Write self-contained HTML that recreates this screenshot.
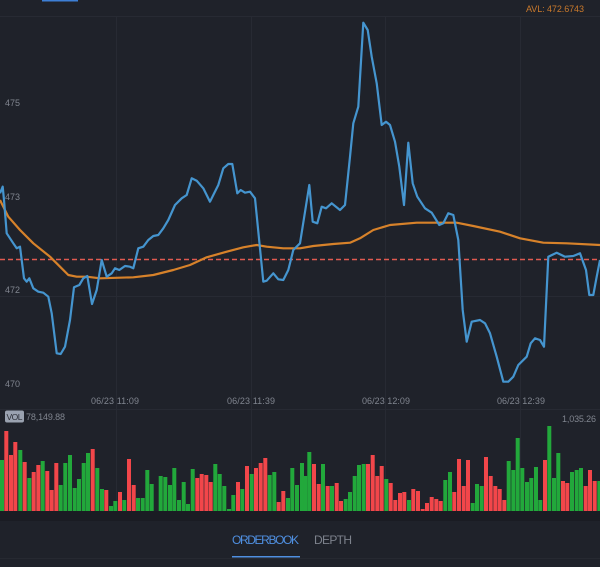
<!DOCTYPE html>
<html><head><meta charset="utf-8"><style>
html,body{margin:0;padding:0;background:#1f222a;width:600px;height:567px;overflow:hidden;font-family:"Liberation Sans",sans-serif}
svg{position:absolute;left:0;top:0}
</style></head><body>
<svg width="600" height="567" viewBox="0 0 600 567" xmlns="http://www.w3.org/2000/svg">
<rect x="0" y="0" width="600" height="567" fill="#1f222a"/>
<rect x="42" y="0" width="36" height="1.5" fill="#3d7fd6"/>
<g stroke="#272a33" stroke-width="1">
<line x1="0" y1="16.5" x2="600" y2="16.5"/>
<line x1="0" y1="296.5" x2="600" y2="296.5"/>
<line x1="0" y1="409.5" x2="600" y2="409.5"/>
<line x1="116.5" y1="16" x2="116.5" y2="511"/>
<line x1="251.5" y1="16" x2="251.5" y2="511"/>
<line x1="385.5" y1="16" x2="385.5" y2="511"/>
<line x1="520.5" y1="16" x2="520.5" y2="511"/>
</g>
<rect x="0" y="511" width="600" height="10" fill="#1a1c23"/>
<line x1="0" y1="558.5" x2="600" y2="558.5" stroke="#262931"/>
<g font-size="9" fill="#80858f">
<text x="5" y="106">475</text>
<text x="5" y="200">473</text>
<text x="5" y="293">472</text>
<text x="5" y="387">470</text>
<text x="91" y="404" textLength="48">06/23 11:09</text>
<text x="227" y="404" textLength="48">06/23 11:39</text>
<text x="362" y="404" textLength="48">06/23 12:09</text>
<text x="497" y="404" textLength="48">06/23 12:39</text>
<text x="26" y="420" textLength="39">78,149.88</text>
<text x="562" y="422" textLength="34">1,035.26</text>
</g>
<text x="526" y="12" font-size="9" fill="#c9792c" textLength="58">AVL: 472.6743</text>
<rect x="5" y="410.5" width="19" height="12" rx="2" fill="#9aa2b0"/>
<text x="6.5" y="420" font-size="8.5" fill="#2a2d35" textLength="16">VOL</text>

<line x1="0" y1="259.5" x2="600" y2="259.5" stroke="#e05a50" stroke-width="1.6" stroke-dasharray="5,3"/>

<polyline fill="none" stroke="#d7822a" stroke-width="2.2" stroke-linejoin="round" points="0,200 3.3,206.7 8.3,216.7 20,230 33.3,243.3 50,256.7 60,266.7 68.3,275 76.7,276.7 86.7,276.7 100,278.3 133.3,277.3 153.3,275 173.3,270 190,265 206.7,257.3 226.7,251.7 243.3,247.3 256.7,245 266.7,246.7 283.3,248.3 300,248.3 313.3,246 333.3,244 350,242.7 360,238.3 373.3,230 390,225 416.7,222.7 456.7,222.7 473.3,226 500,231.7 520,238.3 543.3,242.7 566.7,243.3 600,245"/>

<polyline fill="none" stroke="#4595cf" stroke-width="2.2" stroke-linejoin="round" points="0,193.3 2.7,186.7 4,200 6.7,233.3 13.3,243.3 16.7,248.3 20,246.7 24,278.3 26.7,281.7 29.3,278.3 33.3,288.3 38.3,291.7 43.3,292.7 48.3,296.7 51.7,313.3 56.7,353.3 60.7,354 65,346.7 70,320 74,287.3 79.3,285 83.3,278.3 87.3,276 92,304 96.7,290 101.7,260 106.7,276.7 111.7,273.3 115,268.3 119.3,270 125,266 130,266.7 133.3,268.3 138.3,248.3 143.3,246.7 148.3,240 153.3,236 158.3,235 163.3,228.3 168.3,220 175,205 181.7,198.3 186.7,195 191.7,178.3 196.7,180.7 203.3,188.3 210,201.7 213.3,195 218.3,185 223.3,168.3 228.3,164 232.3,164 237.3,193.3 240.7,190 245,192.7 250,191.7 255,198.3 263.3,281.7 266.7,280.7 273.3,273.3 278.3,279.3 283.3,280 288.3,270 293.3,250 300,243.3 309.3,185 312.7,221.7 317.3,223.3 321.7,206.7 326,208.3 331.7,203.3 340,210 345,205 350,156.7 353.3,123.3 358.3,106.7 363.3,22.7 367.7,30 371.7,56.7 376.7,83.3 381.7,125 386,121.7 390,125 395,141.7 399.3,166.7 404,205 408.3,142.7 412.7,183.3 417.3,196.7 425,208.3 431.7,212.7 439.3,225 443.3,223.3 448.3,213.3 453.3,215 458.3,240 462.7,310 466.7,341.7 471.7,321.7 480,320 485,323.3 490,333.3 496.7,356.7 503.3,381.7 508.3,381.7 513.3,376.7 518.3,365 526.7,356.7 530.7,343.3 535,338.3 540,340 544,346.7 548.3,256.7 556.7,252.7 565,256.7 573.3,256 580,253.3 586,270 589.3,295 593.3,295 596.7,276.7 600,260"/>

<g fill="#22a83b">
<rect x="0" y="460" width="4" height="51"/>
<rect x="18.3" y="450" width="4" height="61"/>
<rect x="27.3" y="478" width="4" height="33"/>
<rect x="40.7" y="461" width="4" height="50"/>
<rect x="58.7" y="485" width="4" height="26"/>
<rect x="63.3" y="463" width="4" height="48"/>
<rect x="68" y="455" width="4" height="56"/>
<rect x="72.7" y="488" width="4" height="23"/>
<rect x="77" y="479" width="4" height="32"/>
<rect x="81.7" y="463" width="4" height="48"/>
<rect x="86" y="453" width="4" height="58"/>
<rect x="95.3" y="468" width="4" height="43"/>
<rect x="100" y="489" width="4" height="22"/>
<rect x="109" y="506" width="4" height="5"/>
<rect x="113.3" y="501" width="4" height="10"/>
<rect x="122.3" y="500" width="4" height="11"/>
<rect x="136" y="498" width="4" height="13"/>
<rect x="140.7" y="498" width="4" height="13"/>
<rect x="145.3" y="470" width="4" height="41"/>
<rect x="149.7" y="484" width="4" height="27"/>
<rect x="158.7" y="476" width="4" height="35"/>
<rect x="163.3" y="477" width="4" height="34"/>
<rect x="168" y="485" width="4" height="26"/>
<rect x="172.3" y="468" width="4" height="43"/>
<rect x="177" y="500" width="4" height="11"/>
<rect x="181.7" y="482" width="4" height="29"/>
<rect x="186" y="504" width="4" height="7"/>
<rect x="190.7" y="469" width="4" height="42"/>
<rect x="213.3" y="464" width="4" height="47"/>
<rect x="217.7" y="474" width="4" height="37"/>
<rect x="222.3" y="486" width="4" height="25"/>
<rect x="227" y="509" width="4" height="2"/>
<rect x="231.3" y="495" width="4" height="16"/>
<rect x="240.3" y="489" width="4" height="22"/>
<rect x="249.7" y="474" width="4" height="37"/>
<rect x="267.7" y="475" width="4" height="36"/>
<rect x="272.3" y="472" width="4" height="39"/>
<rect x="286" y="498" width="4" height="13"/>
<rect x="290.3" y="468" width="4" height="43"/>
<rect x="295" y="485" width="4" height="26"/>
<rect x="300" y="463" width="4" height="48"/>
<rect x="303.3" y="476" width="4" height="35"/>
<rect x="307.3" y="452" width="4" height="59"/>
<rect x="321" y="464" width="4" height="47"/>
<rect x="330" y="486" width="4" height="25"/>
<rect x="343.7" y="499" width="4" height="12"/>
<rect x="348" y="492" width="4" height="19"/>
<rect x="352.7" y="476" width="4" height="35"/>
<rect x="357" y="465" width="4" height="46"/>
<rect x="361.7" y="464" width="4" height="47"/>
<rect x="384.3" y="479" width="4" height="32"/>
<rect x="407" y="500" width="4" height="11"/>
<rect x="443.3" y="480" width="4" height="31"/>
<rect x="448" y="472" width="4" height="39"/>
<rect x="470.7" y="503" width="4" height="8"/>
<rect x="475" y="484" width="4" height="27"/>
<rect x="479.7" y="486" width="4" height="25"/>
<rect x="506.7" y="461" width="4" height="50"/>
<rect x="511.3" y="470" width="4" height="41"/>
<rect x="515.7" y="438" width="4" height="73"/>
<rect x="520.3" y="468" width="4" height="43"/>
<rect x="525" y="482" width="4" height="29"/>
<rect x="529.3" y="478" width="4" height="33"/>
<rect x="534" y="467" width="4" height="44"/>
<rect x="538.3" y="500" width="4" height="11"/>
<rect x="547.3" y="426" width="4" height="85"/>
<rect x="552" y="478" width="4" height="33"/>
<rect x="556.3" y="453" width="4" height="58"/>
<rect x="570" y="472" width="4" height="39"/>
<rect x="574.7" y="470" width="4" height="41"/>
<rect x="579" y="468" width="4" height="43"/>
<rect x="597.3" y="481" width="3" height="30"/>
</g>
<g fill="#f2464a">
<rect x="4.3" y="431" width="4" height="80"/>
<rect x="9" y="455" width="4" height="56"/>
<rect x="13.3" y="442" width="4" height="69"/>
<rect x="22.7" y="462" width="4" height="49"/>
<rect x="31.7" y="472" width="4" height="39"/>
<rect x="36.3" y="465" width="4" height="46"/>
<rect x="45.3" y="471" width="4" height="40"/>
<rect x="49.7" y="490" width="4" height="21"/>
<rect x="54.3" y="463" width="4" height="48"/>
<rect x="90.7" y="449" width="4" height="62"/>
<rect x="104.3" y="490" width="4" height="21"/>
<rect x="118" y="492" width="4" height="19"/>
<rect x="127" y="459" width="4" height="52"/>
<rect x="131.7" y="485" width="4" height="26"/>
<rect x="195.3" y="478" width="4" height="33"/>
<rect x="199.7" y="474" width="4" height="37"/>
<rect x="204.3" y="475" width="4" height="36"/>
<rect x="208.7" y="482" width="4" height="29"/>
<rect x="236" y="482" width="4" height="29"/>
<rect x="245" y="466" width="4" height="45"/>
<rect x="254" y="468" width="4" height="43"/>
<rect x="258.7" y="463" width="4" height="48"/>
<rect x="263.3" y="458" width="4" height="53"/>
<rect x="276.7" y="502" width="4" height="9"/>
<rect x="281.3" y="491" width="4" height="20"/>
<rect x="312" y="464" width="4" height="47"/>
<rect x="316.7" y="484" width="4" height="27"/>
<rect x="325.7" y="486" width="4" height="25"/>
<rect x="334.7" y="483" width="4" height="28"/>
<rect x="339" y="501" width="4" height="10"/>
<rect x="366" y="464" width="4" height="47"/>
<rect x="370.7" y="455" width="4" height="56"/>
<rect x="375.3" y="476" width="4" height="35"/>
<rect x="379.7" y="466" width="4" height="45"/>
<rect x="388.7" y="483" width="4" height="28"/>
<rect x="393.3" y="500" width="4" height="11"/>
<rect x="398" y="493" width="4" height="18"/>
<rect x="402.3" y="492" width="4" height="19"/>
<rect x="411.3" y="489" width="4" height="22"/>
<rect x="416" y="491" width="4" height="20"/>
<rect x="420.7" y="509" width="4" height="2"/>
<rect x="425" y="503" width="4" height="8"/>
<rect x="429.7" y="497" width="4" height="14"/>
<rect x="434.3" y="499" width="4" height="12"/>
<rect x="438.7" y="501" width="4" height="10"/>
<rect x="452.3" y="492" width="4" height="19"/>
<rect x="457" y="459" width="4" height="52"/>
<rect x="461.7" y="486" width="4" height="25"/>
<rect x="466" y="460" width="4" height="51"/>
<rect x="484" y="457" width="4" height="54"/>
<rect x="488.7" y="476" width="4" height="35"/>
<rect x="493.3" y="486" width="4" height="25"/>
<rect x="497.7" y="489" width="4" height="22"/>
<rect x="502.3" y="500" width="4" height="11"/>
<rect x="543" y="460" width="4" height="51"/>
<rect x="561" y="481" width="4" height="30"/>
<rect x="565.3" y="483" width="4" height="28"/>
<rect x="583.7" y="486" width="4" height="25"/>
<rect x="588" y="470" width="4" height="41"/>
<rect x="592.7" y="481" width="4" height="30"/>
</g>

<text x="232" y="544" font-size="12" fill="#4f8fe0" textLength="67">ORDERBOOK</text>
<text x="314" y="544" font-size="12" fill="#7d828c" textLength="38">DEPTH</text>
<rect x="232" y="556" width="68" height="1.5" fill="#4f8fe0"/>
</svg>
</body></html>
